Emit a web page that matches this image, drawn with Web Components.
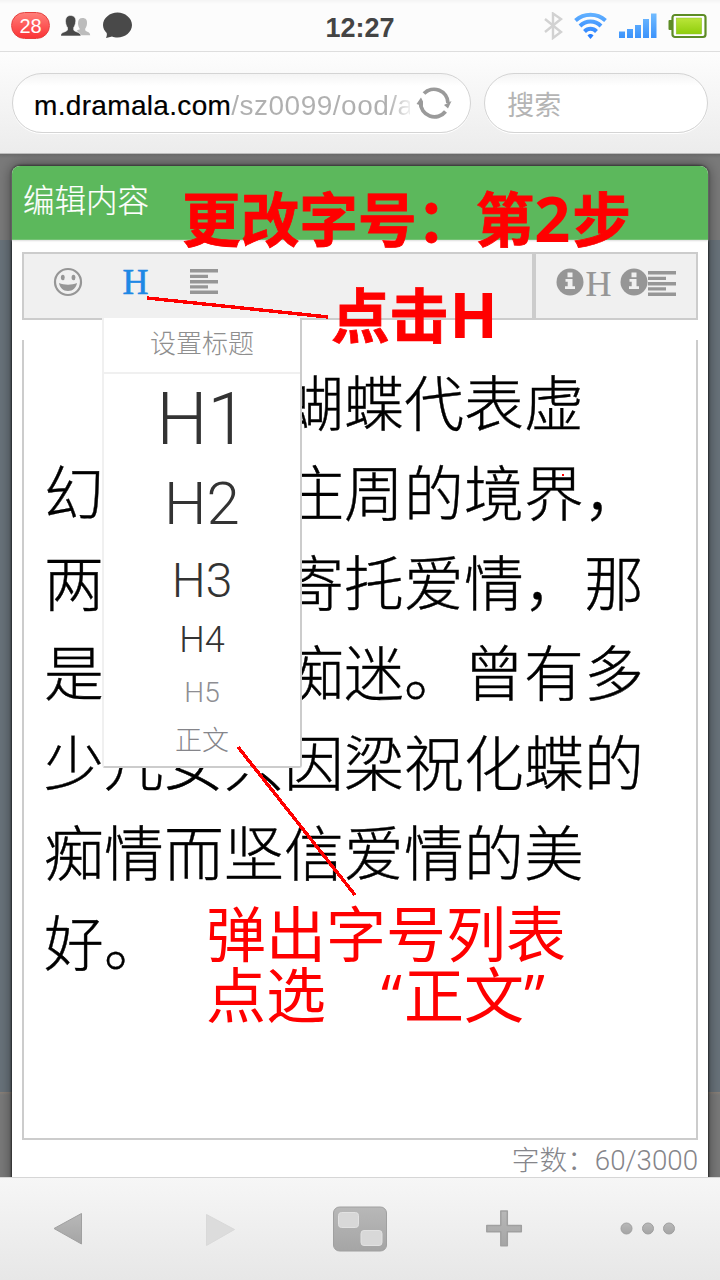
<!DOCTYPE html>
<html lang="zh-CN">
<head>
<meta charset="utf-8">
<title>编辑内容</title>
<style>
html,body{margin:0;height:100%}
body{font-family:"Liberation Sans","Noto Sans CJK SC",sans-serif;overflow:hidden}
</style>
</head>
<body>
<phone-screen>
  <status-bar slot="status" count="28">12:27</status-bar>
  <address-bar slot="address"><b slot="host">m.dramala.com</b><span slot="path">/sz0099/ood/a</span><span slot="search">搜索</span></address-bar>
  <edit-dialog>
    <span slot="title">编辑内容</span>
    <editor-tools></editor-tools>
    <editor-body></editor-body>
    <span slot="count">字数：60/3000</span>
  </edit-dialog>
  <nav-bar slot="nav"></nav-bar>
  <guide-notes slot="notes"></guide-notes>
</phone-screen>
<script>
const define=(name,html)=>{
  const t=document.createElement('template');
  t.innerHTML=html;
  customElements.define(name,class extends HTMLElement{
    constructor(){super();this.attachShadow({mode:'open'}).append(t.content.cloneNode(true));}
    connectedCallback(){
      const n=this.shadowRoot.querySelector('[data-count]');
      if(n)n.textContent=this.getAttribute('count');
    }
  });
};

define('phone-screen',`<style>
:host{display:flex;flex-direction:column;width:720px;height:1280px;position:relative;overflow:hidden;background:#fff}
main{flex:1;min-height:0;overflow:hidden;padding:12px 12px 0;box-sizing:border-box;
background:linear-gradient(#6b6b6b 0,#7a7a7a 4px,#7a7a7a 86px,#69737b 86px,#69737b 938px,#8b8178 938px,#7a7a7a 941px)}
</style><slot name="status"></slot><slot name="address"></slot><main><slot></slot></main><slot name="nav"></slot><slot name="notes"></slot>`);

define('status-bar',`<style>
:host{display:flex;justify-content:space-between;align-items:center;height:52px;box-sizing:border-box;padding:0 13px 0 11px;background:linear-gradient(#f4f4f4,#fcfcfc 4px);border-bottom:1px solid #dedede;position:relative;flex:none}
.l,.r{display:flex;align-items:center}
.n{width:39px;height:27px;border-radius:14px;box-sizing:border-box;border:1px solid #e5413f;background:linear-gradient(#ff7e79,#fb3436);color:#fff;font-size:20px;line-height:26px;text-align:center}
.t{position:absolute;left:0;right:0;text-align:center;font-weight:bold;font-size:27px;line-height:32px;top:12px;color:#444}
svg{display:block}
</style>
<div class="l"><div class="n" data-count></div>
<svg width="31" height="24" viewBox="0 0 31 24" style="margin-left:11px"><path fill="#bcbcbc" d="M21.500 4c3.500 0 4.800 2.200 4.500 5.500-.1 2.500-1 4-1.800 5.300v1.500c1 1.800 5 1.500 5 5H18l-2-5 3-1c-1.400-2-2-4-2-6 0-3.500 1.500-5.300 4.500-5.300z"/><path fill="#494949" stroke="#fcfcfc" stroke-width=".6" d="M9.500 1.500c4 0 5.600 2.700 5.200 6-.1 2.500-1.200 5-2 6v2.500c1 2.200 7.300 1.900 7.300 6H-.5c0-4.100 5.800-3.800 7-6v-2.500c-1-1-1.900-3.500-2-6 0-3.500 1.500-6 5-6z"/></svg>
<svg width="30" height="28" viewBox="0 0 30 28" style="margin-left:11px"><path fill="#494949" d="M14.500 .5C22 .5 29 6 29 13S22 25.500 14.500 25.500c-2 0-4-.4-5.500-1L3 26c.8-1.500 1.100-3.300.7-5C1.500 19 0 16 0 13 0 6 7 .5 14.500 .5z"/></svg></div>
<div class="t"><slot></slot></div>
<div class="r">
<svg width="20" height="28" viewBox="0 0 20 28"><path d="M2 7l16 13-8 6V1.500L18 7 2 20" fill="none" stroke="#d2d2d2" stroke-width="2.400"/></svg>
<svg width="33" height="28" viewBox="0 0 33 28" style="margin-left:11px"><defs><linearGradient id="g" x2="0" y2="26" gradientUnits="userSpaceOnUse"><stop stop-color="#65b4ff"/><stop offset="1" stop-color="#287fff"/></linearGradient></defs><g fill="none" stroke="url(#g)" stroke-width="4"><path d="M1.500 8.500C10 .8 23 .8 31.500 8.500"/><path d="M6 14c6-6 15-6 21 0"/><path d="M10.500 19.500c3.500-3.600 8.500-3.600 12 0"/></g><path fill="#287fff" d="M16.500 27l-3-3.500c1.500-2 4.500-2 6 0z"/></svg>
<svg width="39" height="28" viewBox="0 0 39 28" style="margin-left:11px"><defs><linearGradient id="s" x2="0" y2="1"><stop stop-color="#72bcff"/><stop offset="1" stop-color="#3c93fb"/></linearGradient></defs><g fill="url(#s)"><path d="M1 19.500h6V26H1zM9 17h6v9H9zM17 13h6v13h-6zM25 7h6v19h-6zM33 1.500h5.500V26H33z"/></g></svg>
<svg width="40" height="28" viewBox="0 0 40 28" style="margin-left:10px"><defs><linearGradient id="b" x2="0" y2="1"><stop stop-color="#bae53a"/><stop offset="1" stop-color="#8fce0b"/></linearGradient></defs><path fill="#5d8c25" d="M1.500 9q0-1 1-1H5v10H2.500q-1 0-1-1z"/><rect x="5.500" y="3" width="33" height="22" rx="2.500" fill="#fff" stroke="#5d8c25" stroke-width="2.200"/><rect x="9.200" y="6" width="25.500" height="16" fill="url(#b)" stroke="#92bd39" stroke-width=".5"/></svg>
</div>`);

define('address-bar',`<style>
:host{display:flex;gap:13px;height:102px;flex:none;box-sizing:border-box;padding:21px 12px 19px;background:linear-gradient(#fdfdfd,#ececec);border-bottom:1px solid #bcbcbc}
div{box-sizing:border-box;height:60px;border:1px solid #d4d4d4;border-radius:31px;background:linear-gradient(#f4f4f4,#fff 12px);box-shadow:0 1px 0 #fff;display:flex;align-items:center}
.u{width:460px;padding-left:21px;font-size:28px;letter-spacing:.33px;white-space:nowrap}
.s{width:224px;padding-left:22px;font:27px/36px "Noto Sans CJK SC",sans-serif;color:#b4b4b4}
.s slot{display:block;margin-top:2px}
p{margin:0;width:376px;overflow:hidden;color:#000;line-height:36px;padding-top:5px}
.p{background:linear-gradient(90deg,#b0b0b0 86%,#fff 101%);-webkit-background-clip:text;background-clip:text;-webkit-text-fill-color:transparent;letter-spacing:.5px}
::slotted(b){font-weight:normal;-webkit-text-stroke:.2px #000}
svg{flex:none}
</style>
<div class="u"><p><slot name="host"></slot><span class="p"><slot name="path"></slot></span></p>
<svg width="36" height="36" viewBox="0 0 36 36" style="margin-left:6px"><g fill="none" stroke="#9a9a9a" stroke-width="3.800"><path d="M8 8.500A14 14 0 0 1 32 18"/><path d="M29.500 26.500A14 14 0 0 1 4.500 17.500"/></g><path fill="#9a9a9a" d="M28 20l7.500-4-3.500 7.500zM.5 19L5 12.500l2 4V21z"/></svg></div>
<div class="s"><slot name="search"></slot></div>`);

define('edit-dialog',`<style>
:host{display:block;height:1020px;background:#fff;border-radius:8px 8px 0 0;box-shadow:0 0 2px 1px rgba(0,0,0,.55),0 0 14px rgba(0,0,0,.5)}
header{height:74px;box-sizing:border-box;padding:9px 11px;background:#5cb85c;border-radius:8px 8px 0 0;color:#fff;font:300 31.500px/47px "Noto Sans CJK SC",sans-serif;-webkit-text-stroke:.2px #fff;border-bottom:1px solid #75c275;box-shadow:0 1px 2px #ddd}
section{padding:12px 10px 0}
footer{text-align:right;font:300 27.700px/42px Roboto,"Noto Sans CJK SC",sans-serif;color:#85858a;padding:0 10px}
</style><header><slot name="title"></slot></header><section><slot></slot></section><footer><slot name="count"></slot></footer>`);

define('editor-tools',`<style>
:host{display:flex;height:68px;position:relative;z-index:2}
div{box-sizing:border-box;border:2px solid #ccc;background:#f0f0f0;display:flex;align-items:flex-start}
.a{width:512px;padding:13px 0 0 29px}
.b{width:164px;padding:13px 0 0 20px}
heading-menu{position:absolute;left:80px;top:66px}
svg{flex:none}
</style>
<div class="a"><svg width="30" height="30" viewBox="0 0 30 30"><circle cx="15" cy="15" r="13" fill="none" stroke="#969696" stroke-width="2.200"/><ellipse cx="9.800" cy="10.500" rx="1.900" ry="2.800" fill="#969696"/><ellipse cx="20.500" cy="10.500" rx="1.900" ry="2.800" fill="#969696"/><path fill="#969696" d="M6 16c5 2.300 13 2.300 18 0-.8 4.500-4 8-9 8s-8.200-3.500-9-8z"/></svg>
<tool-h style="margin-left:39px;color:#1e88e5">H</tool-h>
<svg width="28" height="30" viewBox="0 0 28 30" style="margin-left:41px"><path fill="#969696" d="M0 2h28v3.500H0zM0 7.700h18v3.200H0zM0 13h28v3.500H0zM0 18.300h18v3.200H0zM0 23.500h28V27H0z"/></svg></div>
<div class="b"><info-dot></info-dot><tool-h style="color:#969696;margin:2px 8px 0 1px;-webkit-text-stroke-width:.2px">H</tool-h><info-dot></info-dot>
<svg width="28" height="30" viewBox="0 0 28 30" style="margin-top:2px"><path fill="#969696" d="M0 2h28v3.500H0zM0 7.700h18v3.200H0zM0 13h28v3.500H0zM0 18.300h18v3.200H0zM0 23.500h28V27H0z"/></svg></div>
<heading-menu></heading-menu>`);

define('tool-h',`<style>:host{display:block;width:27px;height:30px;text-align:center;font:36px/30px "Liberation Serif",serif;-webkit-text-stroke:.6px currentColor}span{display:inline-block;margin:0 -4px}</style><span><slot></slot></span>`);
define('info-dot',`<style>:host{display:block;width:28px;height:30px;flex:none}svg{display:block}</style><svg width="28" height="30" viewBox="0 0 28 30"><circle cx="14" cy="15" r="13.500" fill="#969696"/><path fill="#f0f0f0" d="M11.500 5.500h5v4.700h-5zM9.500 12h7v7.300h2.500V22H9v-2.700h2.700v-4.500H9.500z"/></svg>`);

define('heading-menu',`<style>
:host{display:block;box-sizing:border-box;width:200px;height:450px;background:#fff;border:2px solid #ccc;border-left-color:#f0f0f0;border-top:0;border-radius:0 0 3px 3px;color:#333;font-family:Roboto,"Noto Sans CJK SC",sans-serif;font-weight:300;text-align:center}
h6{margin:0;box-sizing:border-box;height:56px;padding-top:11px;line-height:30px;border-bottom:2px solid #f0f0f0;font-size:26px;font-weight:300;color:#8e8e8e}
div{display:flex;align-items:center;justify-content:center}
</style><h6>设置标题</h6>
<div style="font-size:72px;line-height:80px;height:91px">H1</div>
<div style="font-size:60px;line-height:70px;height:78px">H2</div>
<div style="font-size:48px;line-height:56px;height:75px">H3</div>
<div style="font-size:36px;line-height:42px;height:43px">H4</div>
<div style="font-size:28px;line-height:34px;height:63px;color:#8e8e93">H5</div>
<div style="font-size:27px;line-height:30px;height:31px;color:#85858a;padding-top:1px">正文</div>`);

define('editor-body',`<style>
:host{display:block;box-sizing:border-box;height:800px;margin-top:20px;border:2px solid #ccc;border-top:0;padding:15px 20px;font:300 59.800px/90px "Noto Sans CJK SC",sans-serif;letter-spacing:.2px;color:#000;-webkit-text-stroke:.4px #000}
div{display:flex;white-space:nowrap;height:90px}
.gap{margin-left:240px}
.gap3{margin-left:180px}
</style>
<div><span class="gap">蝴蝶代表虚</span></div>
<div><span>幻</span><span class="gap3">庄周的境界，</span></div>
<div><span>两</span><span class="gap3">寄托爱情，那</span></div>
<div><span>是</span><span class="gap3">痴迷。曾有多</span></div>
<div>少儿女只因梁祝化蝶的</div><div>痴情而坚信爱情的美</div><div>好。</div>`);

define('nav-bar',`<style>
:host{display:flex;flex:none;height:103px;box-sizing:border-box;border-top:1px solid #d6d6d6;background:linear-gradient(#f6f6f6,#e7e7e7)}
svg{display:block}
</style><svg width="720" height="102" viewBox="0 1178 720 102"><defs><linearGradient id="g" x2="0" y2="1"><stop stop-color="#b8b8b8"/><stop offset="1" stop-color="#a5a5a5"/></linearGradient></defs>
<g fill="url(#g)" stroke="#a0a0a0" stroke-linejoin="round"><path d="M54 1228.500l27.500-15v30.500z"/>
<rect x="333.500" y="1207" width="53" height="44" rx="6"/>
<path stroke-width="1.500" d="M500.800 1211h6.500v14.500h14v6.300h-14v14h-6.500v-14h-14v-6.300h14z"/>
<circle cx="626.500" cy="1228.500" r="5.500"/><circle cx="648" cy="1228.500" r="5.500"/><circle cx="669" cy="1228.500" r="5.500"/></g>
<path d="M234.500 1229.500l-28-15v31z" fill="#dcdcdc" stroke="#d9d9d9" stroke-linejoin="round"/>
<g fill="#d8d8d8" stroke="#e2e2e2"><rect x="338.500" y="1212.500" width="20" height="15" rx="3"/><rect x="361" y="1230.500" width="21" height="15" rx="3"/></g></svg>`);

define('guide-notes',`<style>
:host{position:absolute;inset:0;z-index:5;color:#f00;font-family:"Noto Sans CJK SC",sans-serif;pointer-events:none}
svg,div{position:absolute}
svg{inset:0}
div{white-space:nowrap}
.b{font-weight:700;font-size:58.700px;line-height:80px;-webkit-text-stroke:.8px #f00}
.n{font-weight:400;font-size:60px;line-height:61px}
.d{display:inline-block;font:bold 63px/1 "Open Sans","Noto Sans",sans-serif;-webkit-text-stroke:0}
.q{display:inline-block;width:23px;font:60px/1 "Open Sans","Noto Sans",sans-serif}
</style>
<svg width="720" height="1280" viewBox="0 0 720 1280" shape-rendering="crispEdges"><g stroke="#f00" stroke-width="3.400" fill="none"><path d="M147 298l181 19"/><path d="M238 747l117 148"/></g><path d="M562 474h2v2h-2z" fill="#f00"/></svg>
<div class="b" style="left:182px;top:177px">更改字号：第<span class="d" style="width:38px">2</span>步</div>
<div class="b" style="left:331px;top:273px">点击<span class="d" style="margin-left:1px">H</span></div>
<div class="n" style="left:206px;top:900px">弹出字号列表</div>
<div class="n" style="left:206px;top:961px">点选</div>
<div class="n" style="left:381px;top:961px"><span class="q">“</span>正文<span class="q">”</span></div>`);
</script>
</body>
</html>
